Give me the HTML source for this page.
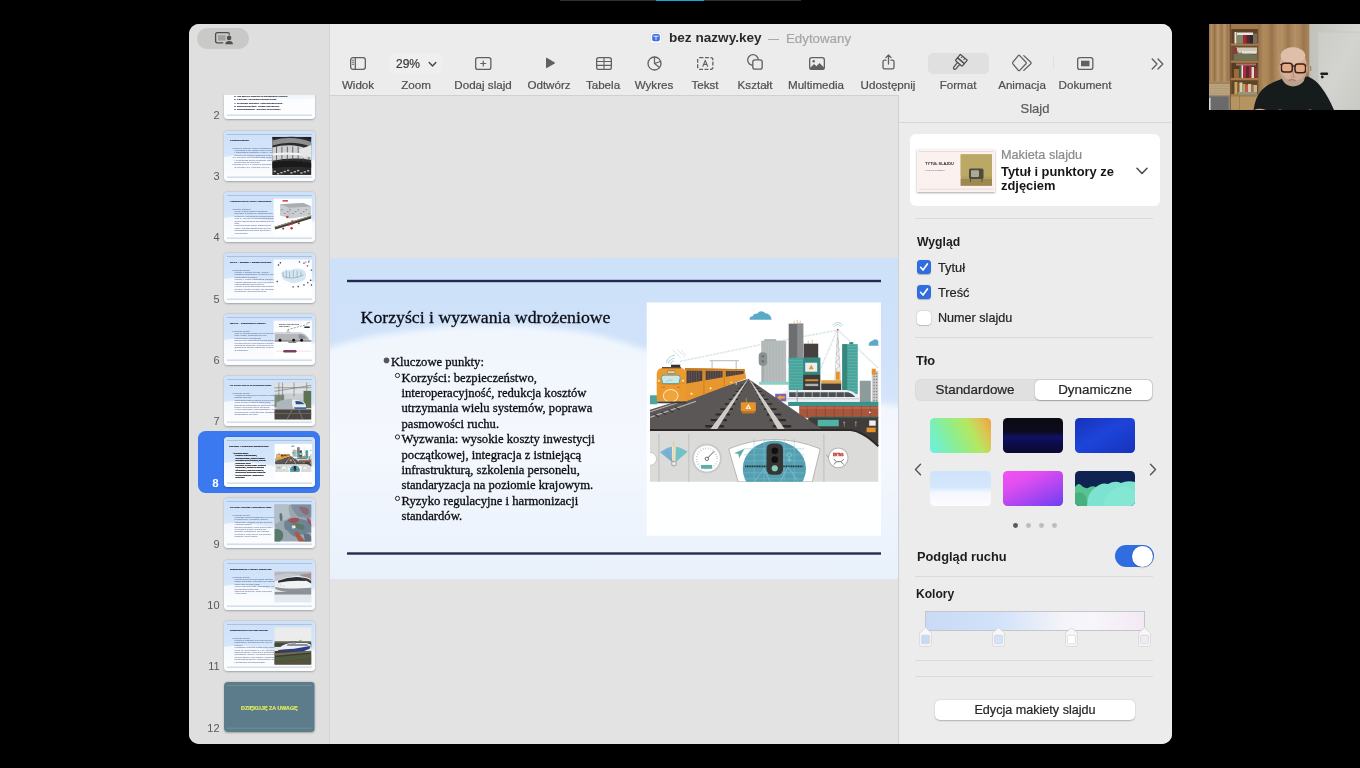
<!DOCTYPE html><html lang="pl"><head><meta charset="utf-8"><title>bez nazwy.key</title><style>
*{box-sizing:border-box;margin:0;padding:0}
html,body{width:1360px;height:768px;background:#000;overflow:hidden}
body{position:relative;font-family:"Liberation Sans",sans-serif;color:#222}
.abs{position:absolute}
#win{position:absolute;left:189px;top:24px;width:982.6px;height:720px;border-radius:10px;overflow:hidden;background:#ececec}
#side{position:absolute;left:0;top:0;width:140.5px;height:720px;background:#dfdfdf;border-right:1px solid #d4d4d4;z-index:2}
#tb{position:absolute;left:140px;top:0;width:842.6px;height:71.5px;background:#ececec;border-bottom:1px solid #d0d0d0}
#canvas{position:absolute;left:140px;top:71px;width:570px;height:649px;background:#e3e3e3}
#panel{position:absolute;left:709px;top:71px;width:273.6px;height:649px;background:#ececec;border-left:1px solid #d0d0d0}
.lbl{position:absolute;font-size:11.6px;color:#4a4a4a;white-space:nowrap;transform:translateX(-50%);line-height:14px;top:54px}
.t{position:absolute;white-space:nowrap;line-height:16px}
.t.r{-webkit-text-stroke:.22px currentColor}
svg{position:absolute;overflow:visible}
.t,.num,svg{will-change:transform}

#list{position:absolute;left:0;top:71px;width:140px;height:649px;overflow:hidden}
.th{position:absolute;left:34.9px;width:90.7px;height:50.2px;border-radius:4px;overflow:hidden;box-shadow:0 .5px 2px rgba(0,0,0,.28);background:#e9f1fc}
.th svg{left:0;top:0}
.num{position:absolute;width:30.6px;text-align:right;font-size:11px;color:#5a5a5a;line-height:14px;left:0}
#sel{position:absolute;left:9px;width:122px;height:61.3px;border-radius:7.5px;background:#3b79f0}

.sep{position:absolute;left:16.200px;width:238.200px;height:1px;background:#dadada}
.sw{position:absolute;width:60.300px;height:35px;border-radius:4.500px;overflow:hidden}
.cb{position:absolute;left:18.100px;width:14px;height:14px;border-radius:3.500px;background:#2f6de0;box-shadow:0 .5px 1px rgba(0,0,0,.25)}
</style></head><body>
<div class="abs" style="left:560px;top:0;width:241px;height:1px;background:#2e2e2e"></div>
<div class="abs" style="left:656px;top:0;width:48px;height:1px;background:#1aa3d4"></div>
<div id="win">
<div id="side"><div class="abs" style="left:8px;top:4px;width:52px;height:20.5px;border-radius:10.2px;background:#c9c9c8"></div><svg style="left:24px;top:6px" width="22" height="17" viewBox="0 0 22 17"><path d="M9.800 12.800H4.300Q2.600 12.800 2.600 11.100V4.400Q2.600 2.700 4.300 2.700H14.700Q16.300 2.700 16.400 4.200" fill="none" stroke="#4d4d4d" stroke-width="1.300" stroke-linecap="round"/><rect x="5" y="5.100" width="7.500" height="5.500" fill="#a2a2a2"/><circle cx="16.100" cy="7.900" r="2.300" fill="#4d4d4d"/><path d="M12.300 14.300Q12.600 11 16.100 11Q19.700 11 20 14.300z" fill="#4d4d4d"/></svg><div id="list"><div class="th" style="top:-25.80px"><svg width="90.7" height="50.2" viewBox="0 0 570 321" preserveAspectRatio="none"><rect width="570" height="321" fill="url(#sbg2)"/><g filter="url(#blur4)"><path d="M-12 170 C60 150 150 160 230 175 C320 190 420 200 585 185 V335 H-12z" fill="#fff" opacity=".7"/></g><rect y="150" width="570" height="171" fill="#fff" opacity=".6"/><rect x="18" y="293" width="534" height="3.500" fill="#8fa6c8"/><text x="64" y="180.6" font-size="15.500" font-weight="700" fill="#161c30" stroke="#161c30" stroke-width=".5" font-family="'Liberation Sans',sans-serif">5. Jak ERTMS wpływa na zarządzanie ruchem</text><text x="64" y="201.2" font-size="15.500" font-weight="700" fill="#161c30" stroke="#161c30" stroke-width=".5" font-family="'Liberation Sans',sans-serif">6. Korzyści i wyzwania wdrożeniowe</text><text x="64" y="221.8" font-size="15.500" font-weight="700" fill="#161c30" stroke="#161c30" stroke-width=".5" font-family="'Liberation Sans',sans-serif">7. Przykłady wdrożeń i interoperacyjność</text><text x="64" y="242.4" font-size="15.500" font-weight="700" fill="#161c30" stroke="#161c30" stroke-width=".5" font-family="'Liberation Sans',sans-serif">8. Bezpieczeństwo i rozwój operacyjny</text><text x="64" y="263.0" font-size="15.500" font-weight="700" fill="#161c30" stroke="#161c30" stroke-width=".5" font-family="'Liberation Sans',sans-serif">9. Podsumowanie i kierunki przyszłości</text></svg></div><div class="num" style="top:12.7px">2</div><div class="th" style="top:35.50px"><svg width="90.7" height="50.2" viewBox="0 0 570 321" preserveAspectRatio="none"><rect width="570" height="321" fill="url(#sbg2)"/><g filter="url(#blur4)"><path d="M-12 170 C60 150 150 160 230 175 C320 190 420 200 585 185 V335 H-12z" fill="#fff" opacity=".7"/></g><rect x="18" y="21" width="534" height="3.500" fill="#8fa6c8"/><rect x="18" y="293" width="534" height="3.500" fill="#8fa6c8"/><text x="36" y="65" font-size="16.500" font-weight="700" fill="#10162c" stroke="#10162c" stroke-width=".5" font-family="'Liberation Serif',serif">Kluczowe punkty</text><text x="54" y="112.0" font-size="13.2" font-weight="700" opacity=".74" fill="#44557c" font-family="'Liberation Sans',sans-serif">ERTMS to wspólny system zarządzania ruchem</text><text x="66" y="127.5" font-size="13.2" font-weight="700" opacity=".74" fill="#44557c" font-family="'Liberation Sans',sans-serif">kolejowym w UE, łączący ETCS (kontrola</text><text x="66" y="143.0" font-size="13.2" font-weight="700" opacity=".74" fill="#44557c" font-family="'Liberation Sans',sans-serif">i sygnalizacja kabinowa) z GSM-R. Obecnie trwa</text><text x="66" y="158.5" font-size="13.2" font-weight="700" opacity=".74" fill="#44557c" font-family="'Liberation Sans',sans-serif">przejście do FRMCS (następca GSM-R).</text><text x="54" y="174.0" font-size="13.2" font-weight="700" opacity=".74" fill="#44557c" font-family="'Liberation Sans',sans-serif">Cel: zapewnić interoperacyjność, bezpieczeństwo</text><text x="66" y="189.5" font-size="13.2" font-weight="700" opacity=".74" fill="#44557c" font-family="'Liberation Sans',sans-serif">i efektywność poprzez wymianę sygnalizacji</text><text x="66" y="205.0" font-size="13.2" font-weight="700" opacity=".74" fill="#44557c" font-family="'Liberation Sans',sans-serif">przytorowej na kabinową.</text><text x="54" y="220.5" font-size="13.2" font-weight="700" opacity=".74" fill="#44557c" font-family="'Liberation Sans',sans-serif">Poziomy ETCS 1-3: poziom 2 dominuje; rozwój</text><text x="66" y="236.0" font-size="13.2" font-weight="700" opacity=".74" fill="#44557c" font-family="'Liberation Sans',sans-serif">w kierunku ATO, satelitów i Level 3.</text><g><rect x="304" y="38" width="244" height="243" fill="#2b2b2c"/><path d="M304 60 Q430 25 548 70 V100 Q430 55 304 92z" fill="#8d8f90"/><path d="M304 38H548V52Q430 22 304 50z" fill="#1d1d1e"/><path d="M304 105 Q430 70 548 120 V185 Q430 165 304 190z" fill="#cfd1d2"/><g stroke="#4a4a4b" stroke-width="5"><path d="M330 100V190"/><path d="M364 100V190"/><path d="M398 100V190"/><path d="M432 100V190"/><path d="M466 100V190"/><path d="M500 100V190"/><path d="M534 100V190"/></g><path d="M304 150Q430 135 548 160" stroke="#f2f2f2" stroke-width="14" fill="none"/><path d="M304 200 Q430 180 548 205 V235 Q430 222 304 238z" fill="#1a1a1b"/><g fill="#b9babb"><rect x="312" y="254" width="14" height="9"/><rect x="333" y="269" width="14" height="9"/><rect x="354" y="262" width="14" height="9"/><rect x="375" y="255" width="14" height="9"/><rect x="396" y="248" width="14" height="9"/><rect x="417" y="263" width="14" height="9"/><rect x="438" y="256" width="14" height="9"/><rect x="459" y="249" width="14" height="9"/><rect x="480" y="264" width="14" height="9"/><rect x="501" y="257" width="14" height="9"/><rect x="522" y="250" width="14" height="9"/></g><path d="M470 120L548 90V150L500 175z" fill="#e6e6e6"/></g></svg></div><div class="num" style="top:74.0px">3</div><div class="th" style="top:96.80px"><svg width="90.7" height="50.2" viewBox="0 0 570 321" preserveAspectRatio="none"><rect width="570" height="321" fill="url(#sbg2)"/><g filter="url(#blur4)"><path d="M-12 170 C60 150 150 160 230 175 C320 190 420 200 585 185 V335 H-12z" fill="#fff" opacity=".7"/></g><rect x="18" y="21" width="534" height="3.500" fill="#8fa6c8"/><rect x="18" y="293" width="534" height="3.500" fill="#8fa6c8"/><text x="36" y="65" font-size="16.500" font-weight="700" fill="#10162c" stroke="#10162c" stroke-width=".5" textLength="262" lengthAdjust="spacingAndGlyphs" font-family="'Liberation Serif',serif">Architektura ERTMS: warstwy i funkcje poziom</text><text x="54" y="112.0" font-size="13.2" font-weight="700" opacity=".74" fill="#44557c" font-family="'Liberation Sans',sans-serif">Warstwy systemu:</text><text x="66" y="127.5" font-size="13.2" font-weight="700" opacity=".74" fill="#44557c" font-family="'Liberation Sans',sans-serif">ETCS: system kontroli pociągów,</text><text x="66" y="143.0" font-size="13.2" font-weight="700" opacity=".74" fill="#44557c" font-family="'Liberation Sans',sans-serif">informuje o prędkości, ograniczeniach</text><text x="66" y="158.5" font-size="13.2" font-weight="700" opacity=".74" fill="#44557c" font-family="'Liberation Sans',sans-serif">prędkości i sytuacjach niebezpiecznych.</text><text x="66" y="174.0" font-size="13.2" font-weight="700" opacity=".74" fill="#44557c" font-family="'Liberation Sans',sans-serif">GSM-R: cyfrowy system komunikacyjny</text><text x="66" y="189.5" font-size="13.2" font-weight="700" opacity=".74" fill="#44557c" font-family="'Liberation Sans',sans-serif">między maszynistą a dyspozytorem oraz</text><text x="66" y="205.0" font-size="13.2" font-weight="700" opacity=".74" fill="#44557c" font-family="'Liberation Sans',sans-serif">RBC.</text><text x="66" y="220.5" font-size="13.2" font-weight="700" opacity=".74" fill="#44557c" font-family="'Liberation Sans',sans-serif">ETML/European Traffic Management</text><text x="66" y="236.0" font-size="13.2" font-weight="700" opacity=".74" fill="#44557c" font-family="'Liberation Sans',sans-serif">Layer): warstwa zarządzania ruchem,</text><text x="66" y="251.5" font-size="13.2" font-weight="700" opacity=".74" fill="#44557c" font-family="'Liberation Sans',sans-serif">optymalizująca przepływ pociągów i</text><text x="66" y="267.0" font-size="13.2" font-weight="700" opacity=".74" fill="#44557c" font-family="'Liberation Sans',sans-serif">rozkład jazdy.</text><g><rect x="312" y="42" width="240" height="238" fill="#fff" opacity=".92"/><rect x="368" y="52" width="34" height="9" fill="#c8353a"/><path d="M352 78 L500 70 L548 92 V150 L420 170 L352 150z" fill="#c9ccd0"/><path d="M352 78 L500 70 L548 92 L410 100z" fill="#a9adb2"/><path d="M410 100V170" stroke="#9aa0a6" stroke-width="2"/><g fill="#8d9298"><rect x="360" y="110" width="10" height="7"/><rect x="377" y="134" width="10" height="7"/><rect x="394" y="122" width="10" height="7"/><rect x="411" y="110" width="10" height="7"/><rect x="428" y="134" width="10" height="7"/><rect x="445" y="122" width="10" height="7"/><rect x="462" y="110" width="10" height="7"/><rect x="479" y="134" width="10" height="7"/><rect x="496" y="122" width="10" height="7"/><rect x="513" y="110" width="10" height="7"/><rect x="530" y="134" width="10" height="7"/></g><path d="M318 222 L548 150 V170 L322 240z" fill="#3a3d40"/><path d="M318 222 L548 150 V156 L318 229z" fill="#9a9d70"/><g fill="#c8353a"><circle cx="398" cy="160" r="8"/><circle cx="430" cy="188" r="7"/><circle cx="470" cy="200" r="7"/><circle cx="425" cy="232" r="8"/><circle cx="372" cy="234" r="7"/><rect x="395" y="205" width="40" height="7" transform="rotate(-17 415 208)"/></g></g></svg></div><div class="num" style="top:135.3px">4</div><div class="th" style="top:158.10px"><svg width="90.7" height="50.2" viewBox="0 0 570 321" preserveAspectRatio="none"><rect width="570" height="321" fill="url(#sbg2)"/><g filter="url(#blur4)"><path d="M-12 170 C60 150 150 160 230 175 C320 190 420 200 585 185 V335 H-12z" fill="#fff" opacity=".7"/></g><rect x="18" y="21" width="534" height="3.500" fill="#8fa6c8"/><rect x="18" y="293" width="534" height="3.500" fill="#8fa6c8"/><text x="36" y="65" font-size="16.500" font-weight="700" fill="#10162c" stroke="#10162c" stroke-width=".5" textLength="262" lengthAdjust="spacingAndGlyphs" font-family="'Liberation Serif',serif">ETCS – poziomy i sposób działania</text><text x="54" y="112.0" font-size="13.2" font-weight="700" opacity=".74" fill="#44557c" font-family="'Liberation Sans',sans-serif">Kluczowe punkty:</text><text x="66" y="127.5" font-size="13.2" font-weight="700" opacity=".74" fill="#44557c" font-family="'Liberation Sans',sans-serif">Poziom 1: sygnały torowe, kabina i</text><text x="66" y="143.0" font-size="13.2" font-weight="700" opacity=".74" fill="#44557c" font-family="'Liberation Sans',sans-serif">urządzenia przytorowe (eurobalisy) ERTMS</text><text x="66" y="158.5" font-size="13.2" font-weight="700" opacity=".74" fill="#44557c" font-family="'Liberation Sans',sans-serif">dostarczają informacje.</text><text x="66" y="174.0" font-size="13.2" font-weight="700" opacity=".74" fill="#44557c" font-family="'Liberation Sans',sans-serif">Poziom 2: ciągła komunikacja radiowa GSM-R,</text><text x="66" y="189.5" font-size="13.2" font-weight="700" opacity=".74" fill="#44557c" font-family="'Liberation Sans',sans-serif">centrala radiowa RBC, brak konieczności</text><text x="66" y="205.0" font-size="13.2" font-weight="700" opacity=".74" fill="#44557c" font-family="'Liberation Sans',sans-serif">sygnalizatorów przytorowych.</text><text x="66" y="220.5" font-size="13.2" font-weight="700" opacity=".74" fill="#44557c" font-family="'Liberation Sans',sans-serif">Poziom 3: pełna autonomiczna kontrola ruchu,</text><text x="66" y="236.0" font-size="13.2" font-weight="700" opacity=".74" fill="#44557c" font-family="'Liberation Sans',sans-serif">ruchomy odstęp blokowy, bez sygnalizacji</text><text x="66" y="251.5" font-size="13.2" font-weight="700" opacity=".74" fill="#44557c" font-family="'Liberation Sans',sans-serif">przytorowej; wdrożenia testowe.</text><g><rect x="312" y="42" width="240" height="238" fill="#fff" opacity=".92"/><path d="M360 130 Q380 100 420 110 Q450 90 490 105 Q520 110 515 150 Q510 180 470 185 Q430 200 400 180 Q360 175 360 130z" fill="#d3e6f3"/><g stroke="#7d8b99" stroke-width="3" fill="none"><path d="M372 150V120M392 160V112M412 160V118M436 158V108M460 160V112M484 150V118M372 150Q430 175 500 140"/></g><g fill="#444b55"><rect x="350" y="58" width="9" height="9" rx="2"/><rect x="338" y="72" width="9" height="9" rx="2"/><rect x="470" y="52" width="9" height="9" rx="2"/><rect x="498" y="60" width="9" height="9" rx="2"/><rect x="528" y="52" width="9" height="9" rx="2"/><rect x="520" y="78" width="9" height="9" rx="2"/><rect x="545" y="105" width="9" height="9" rx="2"/><rect x="330" y="178" width="9" height="9" rx="2"/><rect x="540" y="170" width="9" height="9" rx="2"/><rect x="545" y="200" width="9" height="9" rx="2"/><rect x="498" y="200" width="9" height="9" rx="2"/><rect x="462" y="210" width="9" height="9" rx="2"/><rect x="430" y="212" width="9" height="9" rx="2"/><rect x="522" y="185" width="9" height="9" rx="2"/></g><g fill="#c8353a"><circle cx="514" cy="58" r="4"/><circle cx="535" cy="48" r="3"/></g></g></svg></div><div class="num" style="top:196.6px">5</div><div class="th" style="top:219.40px"><svg width="90.7" height="50.2" viewBox="0 0 570 321" preserveAspectRatio="none"><rect width="570" height="321" fill="url(#sbg2)"/><g filter="url(#blur4)"><path d="M-12 170 C60 150 150 160 230 175 C320 190 420 200 585 185 V335 H-12z" fill="#fff" opacity=".7"/></g><rect x="18" y="21" width="534" height="3.500" fill="#8fa6c8"/><rect x="18" y="293" width="534" height="3.500" fill="#8fa6c8"/><text x="36" y="65" font-size="16.500" font-weight="700" fill="#10162c" stroke="#10162c" stroke-width=".5" font-family="'Liberation Serif',serif">GSM-R – komunikacja radiowa</text><text x="54" y="112.0" font-size="13.2" font-weight="700" opacity=".74" fill="#44557c" font-family="'Liberation Sans',sans-serif">Kluczowe punkty:</text><text x="66" y="127.5" font-size="13.2" font-weight="700" opacity=".74" fill="#44557c" font-family="'Liberation Sans',sans-serif">GSM-R: specjalizowana sieć dla kolejnictwa</text><text x="66" y="143.0" font-size="13.2" font-weight="700" opacity=".74" fill="#44557c" font-family="'Liberation Sans',sans-serif">(głos i dane), niezależna od sieci</text><text x="66" y="158.5" font-size="13.2" font-weight="700" opacity=".74" fill="#44557c" font-family="'Liberation Sans',sans-serif">komercyjnych operatorów.</text><text x="66" y="174.0" font-size="13.2" font-weight="700" opacity=".74" fill="#44557c" font-family="'Liberation Sans',sans-serif">Bezpieczna komunikacja między maszynistą</text><text x="66" y="189.5" font-size="13.2" font-weight="700" opacity=".74" fill="#44557c" font-family="'Liberation Sans',sans-serif">a dyspozytorem, priorytetyzacja połączeń,</text><text x="66" y="205.0" font-size="13.2" font-weight="700" opacity=".74" fill="#44557c" font-family="'Liberation Sans',sans-serif">połączenia alarmowe, transmisja ETCS.</text><text x="66" y="220.5" font-size="13.2" font-weight="700" opacity=".74" fill="#44557c" font-family="'Liberation Sans',sans-serif">Migracja do nowego standardu FRMCS</text><text x="66" y="236.0" font-size="13.2" font-weight="700" opacity=".74" fill="#44557c" font-family="'Liberation Sans',sans-serif">w przyszłości.</text><g><rect x="312" y="42" width="240" height="238" fill="#fff" opacity=".92"/><text x="345" y="72" font-size="9" font-weight="700" fill="#222" font-family="'Liberation Sans',sans-serif">Euroradio / Train data request</text><text x="345" y="83" font-size="9" font-weight="700" fill="#222" font-family="'Liberation Sans',sans-serif">GSM-R network</text><path d="M400 100L520 68" stroke="#333" stroke-width="3" stroke-dasharray="12 8"/><rect x="505" y="80" width="34" height="9" fill="#222"/><path d="M520 60l20-8" stroke="#333" stroke-width="3"/><path d="M318 118 H480 Q510 122 535 160 V168 H318z" fill="#b5b7ba"/><path d="M318 118H480Q495 120 505 128H318z" fill="#d2d4d6"/><path d="M470 128 Q500 132 520 156 H470z" fill="#8e9195"/><path d="M395 118l8-14l8 14" stroke="#333" stroke-width="2.500" fill="none"/><rect x="318" y="170" width="232" height="5" fill="#222"/><circle cx="352" cy="168" r="9" fill="#111"/><circle cx="438" cy="168" r="9" fill="#111"/><circle cx="488" cy="168" r="9" fill="#111"/><rect x="405" y="178" width="50" height="5" fill="#444"/><path d="M325 238H548" stroke="#e3a9c0" stroke-width="2.500"/><rect x="372" y="230" width="84" height="17" rx="8.500" fill="#7b3b63"/></g></svg></div><div class="num" style="top:257.9px">6</div><div class="th" style="top:280.70px"><svg width="90.7" height="50.2" viewBox="0 0 570 321" preserveAspectRatio="none"><rect width="570" height="321" fill="url(#sbg2)"/><g filter="url(#blur4)"><path d="M-12 170 C60 150 150 160 230 175 C320 190 420 200 585 185 V335 H-12z" fill="#fff" opacity=".7"/></g><rect x="18" y="21" width="534" height="3.500" fill="#8fa6c8"/><rect x="18" y="293" width="534" height="3.500" fill="#8fa6c8"/><text x="36" y="65" font-size="16.500" font-weight="700" fill="#10162c" stroke="#10162c" stroke-width=".5" textLength="262" lengthAdjust="spacingAndGlyphs" font-family="'Liberation Serif',serif">Jak ERTMS wpływa na zarządzanie ruchem</text><text x="54" y="112.0" font-size="13.2" font-weight="700" opacity=".74" fill="#44557c" font-family="'Liberation Sans',sans-serif">Kluczowe punkty:</text><text x="66" y="127.5" font-size="13.2" font-weight="700" opacity=".74" fill="#44557c" font-family="'Liberation Sans',sans-serif">Precyzyjna lokalizacja pociągów, krótsze</text><text x="66" y="143.0" font-size="13.2" font-weight="700" opacity=".74" fill="#44557c" font-family="'Liberation Sans',sans-serif">odstępy blokowe.</text><text x="66" y="158.5" font-size="13.2" font-weight="700" opacity=".74" fill="#44557c" font-family="'Liberation Sans',sans-serif">Zautomatyzowana kontrola bezpieczeństwa,</text><text x="66" y="174.0" font-size="13.2" font-weight="700" opacity=".74" fill="#44557c" font-family="'Liberation Sans',sans-serif">ciągły nadzór prędkości maszynisty.</text><text x="66" y="189.5" font-size="13.2" font-weight="700" opacity=".74" fill="#44557c" font-family="'Liberation Sans',sans-serif">Możliwość dynamicznego dostosowywania</text><text x="66" y="205.0" font-size="13.2" font-weight="700" opacity=".74" fill="#44557c" font-family="'Liberation Sans',sans-serif">tempa i kolejności ruchu pociągów.</text><text x="66" y="220.5" font-size="13.2" font-weight="700" opacity=".74" fill="#44557c" font-family="'Liberation Sans',sans-serif">Lepsze planowanie przepustowości i reakcja</text><text x="66" y="236.0" font-size="13.2" font-weight="700" opacity=".74" fill="#44557c" font-family="'Liberation Sans',sans-serif">na zakłócenia; efektywniejsze zarządzanie</text><text x="66" y="251.5" font-size="13.2" font-weight="700" opacity=".74" fill="#44557c" font-family="'Liberation Sans',sans-serif">infrastrukturą kolejową.</text><g><rect x="318" y="42" width="230" height="236" fill="#c9cdd0"/><rect x="318" y="42" width="230" height="70" fill="#dfe2e4"/><rect x="500" y="95" width="48" height="110" fill="#5d7350"/><rect x="318" y="120" width="60" height="80" fill="#7d8a78"/><g stroke="#6f7478" stroke-width="4"><path d="M345 42V215M368 42V215M318 75H548M440 42V130M520 42V120M318 98L548 60"/></g><path d="M330 170 Q380 140 450 150 Q500 150 515 185 V215 H330z" fill="#aeb6bd"/><path d="M430 150 Q500 150 515 188 V214 H440 Q420 180 430 150z" fill="#e9edf0"/><path d="M448 160 Q490 158 505 180 H452z" fill="#2d4f86"/><path d="M440 200H516V212H444z" fill="#3e68a8"/><rect x="318" y="214" width="230" height="64" fill="#4a4540"/><path d="M430 214L395 278M470 214L495 278" stroke="#8b857c" stroke-width="5"/><path d="M318 240H548" stroke="#6b655d" stroke-width="6"/></g></svg></div><div class="num" style="top:319.2px">7</div><div id="sel" style="top:336.4px"></div><div class="th" style="top:342.00px"><svg width="90.7" height="50.2" viewBox="0 0 570 321" preserveAspectRatio="none"><rect width="570" height="321" fill="url(#sbg2)"/><g filter="url(#blur4)"><path d="M-12 170 C60 150 150 160 230 175 C320 190 420 200 585 185 V335 H-12z" fill="#fff" opacity=".7"/></g><rect x="18" y="21" width="534" height="3.500" fill="#8fa6c8"/><rect x="18" y="293" width="534" height="3.500" fill="#8fa6c8"/><use href="#s8" width="570" height="321" style="--sw:.9px"/></svg></div><div class="num" style="top:380.5px;color:#fff;font-weight:700;width:29.700px;font-size:11.500px">8</div><div class="th" style="top:403.30px"><svg width="90.7" height="50.2" viewBox="0 0 570 321" preserveAspectRatio="none"><rect width="570" height="321" fill="url(#sbg2)"/><g filter="url(#blur4)"><path d="M-12 170 C60 150 150 160 230 175 C320 190 420 200 585 185 V335 H-12z" fill="#fff" opacity=".7"/></g><rect x="18" y="21" width="534" height="3.500" fill="#8fa6c8"/><rect x="18" y="293" width="534" height="3.500" fill="#8fa6c8"/><text x="36" y="65" font-size="16.500" font-weight="700" fill="#10162c" stroke="#10162c" stroke-width=".5" textLength="262" lengthAdjust="spacingAndGlyphs" font-family="'Liberation Serif',serif">Przykłady wdrożeń i interoperacyjność</text><text x="54" y="112.0" font-size="13.2" font-weight="700" opacity=".74" fill="#44557c" font-family="'Liberation Sans',sans-serif">Kluczowe punkty:</text><text x="66" y="127.5" font-size="13.2" font-weight="700" opacity=".74" fill="#44557c" font-family="'Liberation Sans',sans-serif">Przykłady krajów wdrażających na szeroką skalę</text><text x="66" y="143.0" font-size="13.2" font-weight="700" opacity=".74" fill="#44557c" font-family="'Liberation Sans',sans-serif">ERTMS/ETCS: Hiszpania, Włochy,</text><text x="66" y="158.5" font-size="13.2" font-weight="700" opacity=".74" fill="#44557c" font-family="'Liberation Sans',sans-serif">Szwajcaria, Holandia, Belgia (poziomy</text><text x="66" y="174.0" font-size="13.2" font-weight="700" opacity=".74" fill="#44557c" font-family="'Liberation Sans',sans-serif">i harmonogramy).</text><text x="66" y="189.5" font-size="13.2" font-weight="700" opacity=".74" fill="#44557c" font-family="'Liberation Sans',sans-serif">Interoperacyjność: jeden pociąg może</text><text x="66" y="205.0" font-size="13.2" font-weight="700" opacity=".74" fill="#44557c" font-family="'Liberation Sans',sans-serif">przekraczać granice państw bez</text><text x="66" y="220.5" font-size="13.2" font-weight="700" opacity=".74" fill="#44557c" font-family="'Liberation Sans',sans-serif">wymiany lokomotywy czy systemu.</text><text x="66" y="236.0" font-size="13.2" font-weight="700" opacity=".74" fill="#44557c" font-family="'Liberation Sans',sans-serif">Wyzwania: różne wersje specyfikacji,</text><text x="66" y="251.5" font-size="13.2" font-weight="700" opacity=".74" fill="#44557c" font-family="'Liberation Sans',sans-serif">migracja i koszt taboru.</text><g><rect x="318" y="42" width="230" height="236" fill="#9aa7b1"/><path d="M318 42H410Q400 90 420 120Q380 150 360 140Q330 170 318 160z" fill="#b4bec6"/><path d="M420 42H548V120Q520 140 500 120Q470 130 450 100Q430 80 420 42z" fill="#7f8f9c"/><path d="M350 100Q362 90 366 110Q372 140 360 150Q346 140 350 100z" fill="#5f7383"/><path d="M380 150Q430 120 480 135Q530 140 548 170V220Q520 215 500 235Q470 225 450 250Q420 240 400 210Q370 200 380 150z" fill="#6f8493"/><path d="M400 140Q430 120 470 130Q480 150 450 160Q420 165 400 140z" fill="#a0525a"/><path d="M470 60Q500 50 530 70Q540 100 520 110Q490 100 470 60z" fill="#8d6a78"/><path d="M430 165Q470 160 500 175Q520 200 490 205Q450 200 430 165z" fill="#587a6a"/><path d="M520 130Q548 125 548 180Q530 170 520 130z" fill="#a0525a"/><path d="M318 200Q350 190 370 220Q380 260 350 278H318z" fill="#587a6a"/><path d="M440 215Q470 210 480 240Q500 270 520 278H470Q450 250 440 215z" fill="#a85a4a"/><path d="M425 178l22-4l4 16l-20 6z" fill="#f3ead2"/><path d="M500 230Q540 220 548 250V278H510z" fill="#5f7383"/></g></svg></div><div class="num" style="top:441.8px">9</div><div class="th" style="top:464.60px"><svg width="90.7" height="50.2" viewBox="0 0 570 321" preserveAspectRatio="none"><rect width="570" height="321" fill="url(#sbg2)"/><g filter="url(#blur4)"><path d="M-12 170 C60 150 150 160 230 175 C320 190 420 200 585 185 V335 H-12z" fill="#fff" opacity=".7"/></g><rect x="18" y="21" width="534" height="3.500" fill="#8fa6c8"/><rect x="18" y="293" width="534" height="3.500" fill="#8fa6c8"/><text x="36" y="65" font-size="16.500" font-weight="700" fill="#10162c" stroke="#10162c" stroke-width=".5" textLength="262" lengthAdjust="spacingAndGlyphs" font-family="'Liberation Serif',serif">Bezpieczeństwo i rozwój: operacyjne</text><text x="54" y="112.0" font-size="13.2" font-weight="700" opacity=".74" fill="#44557c" font-family="'Liberation Sans',sans-serif">Kluczowe punkty:</text><text x="66" y="127.5" font-size="13.2" font-weight="700" opacity=".74" fill="#44557c" font-family="'Liberation Sans',sans-serif">Redukcja ryzyka przejechania sygnału,</text><text x="66" y="143.0" font-size="13.2" font-weight="700" opacity=".74" fill="#44557c" font-family="'Liberation Sans',sans-serif">nadzór prędkości, automatyczne hamowanie,</text><text x="66" y="158.5" font-size="13.2" font-weight="700" opacity=".74" fill="#44557c" font-family="'Liberation Sans',sans-serif">odporność na błąd ludzki.</text><text x="66" y="174.0" font-size="13.2" font-weight="700" opacity=".74" fill="#44557c" font-family="'Liberation Sans',sans-serif">Cyberbezpieczeństwo i szyfrowanie (OTA, KMS),</text><text x="66" y="189.5" font-size="13.2" font-weight="700" opacity=".74" fill="#44557c" font-family="'Liberation Sans',sans-serif">niezawodność łączności.</text><text x="66" y="205.0" font-size="13.2" font-weight="700" opacity=".74" fill="#44557c" font-family="'Liberation Sans',sans-serif">Szkolenia personelu, nowe procedury</text><text x="66" y="220.5" font-size="13.2" font-weight="700" opacity=".74" fill="#44557c" font-family="'Liberation Sans',sans-serif">i utrzymanie.</text><g><rect x="318" y="75" width="230" height="195" fill="#dde2e8"/><rect x="318" y="75" width="230" height="60" fill="#c5c9cf"/><path d="M470 80H548V130H500z" fill="#a9908f"/><path d="M318 100L400 85L470 95L548 85V75H318z" fill="#b4b9c0"/><path d="M322 138 Q400 100 480 104 Q530 108 548 128 V200 H430 Q360 196 322 176z" fill="#f1f3f4"/><path d="M340 132 Q410 104 478 110 L520 135 Q420 128 340 146z" fill="#2b2f35"/><path d="M470 112L520 135L548 150V132Q520 108 470 112z" fill="#3a3f46"/><path d="M322 172Q400 190 548 178V205H400Q350 200 322 182z" fill="#8d9299"/><path d="M318 205H548V222H318z" fill="#4a4e54" opacity=".55"/><rect x="318" y="222" width="230" height="48" fill="#e4e9ef"/><path d="M330 150l14 20M350 150l12 22M372 160l8 14" stroke="#9ca3ab" stroke-width="2"/></g></svg></div><div class="num" style="top:503.1px">10</div><div class="th" style="top:525.90px"><svg width="90.7" height="50.2" viewBox="0 0 570 321" preserveAspectRatio="none"><rect width="570" height="321" fill="url(#sbg2)"/><g filter="url(#blur4)"><path d="M-12 170 C60 150 150 160 230 175 C320 190 420 200 585 185 V335 H-12z" fill="#fff" opacity=".7"/></g><rect x="18" y="21" width="534" height="3.500" fill="#8fa6c8"/><rect x="18" y="293" width="534" height="3.500" fill="#8fa6c8"/><text x="36" y="65" font-size="16.500" font-weight="700" fill="#10162c" stroke="#10162c" stroke-width=".5" font-family="'Liberation Serif',serif">Podsumowanie i przyszłe kierunki</text><text x="54" y="112.0" font-size="13.2" font-weight="700" opacity=".74" fill="#44557c" font-family="'Liberation Sans',sans-serif">Kluczowe punkty:</text><text x="66" y="127.5" font-size="13.2" font-weight="700" opacity=".74" fill="#44557c" font-family="'Liberation Sans',sans-serif">ERTMS to kluczowy filar nowoczesnej,</text><text x="66" y="143.0" font-size="13.2" font-weight="700" opacity=".74" fill="#44557c" font-family="'Liberation Sans',sans-serif">bezpiecznej i interoperacyjnej kolei w</text><text x="66" y="158.5" font-size="13.2" font-weight="700" opacity=".74" fill="#44557c" font-family="'Liberation Sans',sans-serif">Europie.</text><text x="66" y="174.0" font-size="13.2" font-weight="700" opacity=".74" fill="#44557c" font-family="'Liberation Sans',sans-serif">Przyszłość: migracja z GSM-R do FRMCS,</text><text x="66" y="189.5" font-size="13.2" font-weight="700" opacity=".74" fill="#44557c" font-family="'Liberation Sans',sans-serif">ETCS L3 / hybrydowy L3, ATO, satelitarne</text><text x="66" y="205.0" font-size="13.2" font-weight="700" opacity=".74" fill="#44557c" font-family="'Liberation Sans',sans-serif">pozycjonowanie, integracja z systemami</text><text x="66" y="220.5" font-size="13.2" font-weight="700" opacity=".74" fill="#44557c" font-family="'Liberation Sans',sans-serif">zarządzania ruchem i cyfrowymi bliźniakami.</text><text x="66" y="236.0" font-size="13.2" font-weight="700" opacity=".74" fill="#44557c" font-family="'Liberation Sans',sans-serif">Rekomendacja: plan migracji i finansowania,</text><text x="66" y="251.5" font-size="13.2" font-weight="700" opacity=".74" fill="#44557c" font-family="'Liberation Sans',sans-serif">modernizacja taboru i infrastruktury, szkolenia</text><text x="66" y="267.0" font-size="13.2" font-weight="700" opacity=".74" fill="#44557c" font-family="'Liberation Sans',sans-serif">i współpraca międzynarodowa.</text><g><rect x="318" y="42" width="230" height="236" fill="#e6e7e8"/><rect x="318" y="42" width="230" height="95" fill="#ececec"/><path d="M318 130H548V165H318z" fill="#5d6552"/><path d="M318 142H400V165H318zM500 140H548V170H500z" fill="#3f463a"/><path d="M338 190 Q350 150 420 140 H520 L545 150 V176 L500 192 H338z" fill="#eef0f3"/><path d="M340 186Q380 180 440 178L540 160V176L500 193H340z" fill="#27408b"/><path d="M400 150H520L535 156H395z" fill="#2d3340"/><path d="M420 132h30v10h-30zM470 128l20-6" stroke="#555" stroke-width="3" fill="#888"/><rect x="318" y="192" width="230" height="86" fill="#3d3a30"/><path d="M318 206L548 190V202L318 222z" fill="#6d6a55"/><path d="M318 232L548 210V240L318 262z" fill="#4f5a3c"/><path d="M318 262L548 240V278H318z" fill="#57503f"/></g></svg></div><div class="num" style="top:564.4px">11</div><div class="th" style="top:587.20px"><svg width="90.7" height="50.2" viewBox="0 0 570 321" preserveAspectRatio="none"><rect width="570" height="321" fill="#5c7c8b"/><rect x="18" y="21" width="534" height="3.500" fill="#7aa39b"/><rect x="18" y="293" width="534" height="3.500" fill="#7aa39b"/><text x="285" y="181" font-size="37" stroke="#dbe95c" stroke-width="1.500" font-weight="700" fill="#dbe95c" text-anchor="middle" textLength="356" lengthAdjust="spacingAndGlyphs" font-family="'Liberation Sans',sans-serif">DZIĘKUJĘ ZA UWAGĘ</text></svg></div><div class="num" style="top:625.7px">12</div></div></div>
<div id="canvas"><svg width="0" height="0" style="position:absolute"><defs><linearGradient id="sbg" x1="0" y1="0" x2="0" y2="1"><stop offset="0" stop-color="#cde1f9"/><stop offset=".3" stop-color="#cfe2f9"/><stop offset=".6" stop-color="#dbe8fb"/><stop offset="1" stop-color="#e6effb"/></linearGradient><linearGradient id="sbg2" x1="0" y1="0" x2="0" y2="1"><stop offset="0" stop-color="#cde1f9"/><stop offset=".45" stop-color="#d3e5fa"/><stop offset=".7" stop-color="#e9f1fc"/><stop offset="1" stop-color="#f3f7fd"/></linearGradient><linearGradient id="cl1" gradientUnits="userSpaceOnUse" x1="0" y1="60" x2="0" y2="321"><stop offset="0" stop-color="#fff" stop-opacity=".7"/><stop offset=".5" stop-color="#fff" stop-opacity=".7"/><stop offset=".8" stop-color="#fff" stop-opacity=".42"/><stop offset="1" stop-color="#fff" stop-opacity=".12"/></linearGradient><filter id="blur4" x="-10%" y="-10%" width="120%" height="120%"><feGaussianBlur stdDeviation="3"/></filter><filter id="blur1"><feGaussianBlur stdDeviation="1.2"/></filter><symbol id="s8" viewBox="0 0 570 321" overflow="hidden"><text x="31.600" y="65.200" font-size="17.760" fill="#0c0c14" stroke="#0c0c14" style="stroke-width:var(--sw,.3px)" font-family="'Liberation Serif',serif">Korzyści i wyzwania wdrożeniowe</text><circle cx="57.500" cy="102.400" r="2.800" fill="#56565a"/><text x="61.9" y="108.30" font-size="12.650" fill="#0c0c10" stroke="#0c0c10" style="stroke-width:var(--sw,.3px)" font-family="'Liberation Serif',serif">Kluczowe punkty:</text><circle cx="68.500" cy="117.47" r="2.100" fill="none" stroke="#2a2a2e" stroke-width="1"/><text x="72.5" y="123.67" font-size="12.650" fill="#0c0c10" stroke="#0c0c10" style="stroke-width:var(--sw,.3px)" font-family="'Liberation Serif',serif">Korzyści: bezpieczeństwo,</text><text x="72.5" y="139.04" font-size="12.650" fill="#0c0c10" stroke="#0c0c10" style="stroke-width:var(--sw,.3px)" font-family="'Liberation Serif',serif">interoperacyjność, redukcja kosztów</text><text x="72.5" y="154.41" font-size="12.650" fill="#0c0c10" stroke="#0c0c10" style="stroke-width:var(--sw,.3px)" font-family="'Liberation Serif',serif">utrzymania wielu systemów, poprawa</text><text x="72.5" y="169.78" font-size="12.650" fill="#0c0c10" stroke="#0c0c10" style="stroke-width:var(--sw,.3px)" font-family="'Liberation Serif',serif">pasmowości ruchu.</text><circle cx="68.500" cy="178.95" r="2.100" fill="none" stroke="#2a2a2e" stroke-width="1"/><text x="72.5" y="185.15" font-size="12.650" fill="#0c0c10" stroke="#0c0c10" style="stroke-width:var(--sw,.3px)" font-family="'Liberation Serif',serif">Wyzwania: wysokie koszty inwestycji</text><text x="72.5" y="200.52" font-size="12.650" fill="#0c0c10" stroke="#0c0c10" style="stroke-width:var(--sw,.3px)" font-family="'Liberation Serif',serif">początkowej, integracja z istniejącą</text><text x="72.5" y="215.89" font-size="12.650" fill="#0c0c10" stroke="#0c0c10" style="stroke-width:var(--sw,.3px)" font-family="'Liberation Serif',serif">infrastrukturą, szkolenia personelu,</text><text x="72.5" y="231.26" font-size="12.650" fill="#0c0c10" stroke="#0c0c10" style="stroke-width:var(--sw,.3px)" font-family="'Liberation Serif',serif">standaryzacja na poziomie krajowym.</text><circle cx="68.500" cy="240.43" r="2.100" fill="none" stroke="#2a2a2e" stroke-width="1"/><text x="72.5" y="246.63" font-size="12.650" fill="#0c0c10" stroke="#0c0c10" style="stroke-width:var(--sw,.3px)" font-family="'Liberation Serif',serif">Ryzyko regulacyjne i harmonizacji</text><text x="72.5" y="262.00" font-size="12.650" fill="#0c0c10" stroke="#0c0c10" style="stroke-width:var(--sw,.3px)" font-family="'Liberation Serif',serif">standardów.</text><rect x="317.700" y="44.500" width="234.300" height="233.300" fill="#fff" opacity=".93"/><svg x="321" y="44.500" width="228.300" height="179.500" viewBox="0 0 228 179" style="position:static;overflow:hidden"><rect x="0" y="0" width="228" height="179" fill="#fff"/><path d="M99.5 17 q-.5-3.5 3-3.5 q1-3 4.5-2.5 q3.5-4.5 8.5-.5 q5 .5 6 6.5z" fill="#5aa9c9"/><path d="M218.5 43 q-.5-4 3.5-5 q3-3 6 0 v5z" fill="#5aa9c9"/><g stroke="#a9c6ce" stroke-width="1.500" stroke-dasharray="0.550 0.850" fill="none" opacity=".85"><path d="M30 58.700 L111 41.800 L187.500 27.400"/><path d="M188.500 28 L227.500 65"/><path d="M186.500 28.500 L170 66.500"/></g><g stroke="#8fc5cf" stroke-width=".7" fill="none"><path d="M184 24 q3.5-4 7 0"/><path d="M182.5 22.5 q5-5.5 10 0"/><path d="M18.500 61q.5-5 6-5.500"/><path d="M16.500 60.500q.5-7 8.500-8"/><path d="M20.500 61.500q.5-3 3.500-3.500"/><path d="M22.500 47l8 8M27 46.500l8 8M31 47.500l5 5" stroke="#cfd9dc"/></g><rect x="111" y="38" width="25" height="42" fill="#b7bdbd"/><g stroke="#a5acac" stroke-width=".5"><path d="M114 39V80"/><path d="M117 39V80"/><path d="M120 39V80"/><path d="M123 39V80"/><path d="M126 39V80"/><path d="M129 39V80"/><path d="M132 39V80"/></g><rect x="114" y="36.5" width="12" height="2" fill="#a9b0b0"/><rect x="138.5" y="21" width="14.5" height="40" fill="#6d6e70"/><rect x="147" y="21" width="6" height="40" fill="#8b8d8f"/><path d="M144 21v-3M147 21v-4M150 21v-3" stroke="#c9803a" stroke-width=".5"/><rect x="153.5" y="41" width="14.5" height="16" fill="#463f3f"/><path d="M158 41v-3M162 41v-4" stroke="#c9803a" stroke-width=".5"/><rect x="138.5" y="55" width="31.5" height="33" fill="#48a39c"/><g stroke="#6fc2bb" stroke-width=".5"><path d="M138.5 58H153"/><path d="M138.5 61H153"/><path d="M138.5 64H153"/><path d="M138.5 67H153"/><path d="M138.5 70H153"/><path d="M138.5 73H153"/><path d="M138.5 76H153"/><path d="M138.5 79H153"/><path d="M138.5 82H153"/><path d="M138.5 85H153"/></g><rect x="153" y="55" width="17" height="17" fill="#37877f"/><rect x="155" y="60" width="12" height="9" fill="#e9eeee"/><path d="M161 62l2.5 4.5h-5z" fill="#e8932a"/><rect x="153" y="72" width="17" height="16" fill="#3b3b3b"/><rect x="155" y="76.5" width="13" height="2" fill="#d98b2b"/><rect x="155" y="81" width="13" height="2.4" fill="#b0b0b0"/><rect x="192" y="41.5" width="15.5" height="50" fill="#48a39c"/><rect x="192" y="41.5" width="5" height="50" fill="#37877f"/><path d="M199 41.5v-2h4v2" fill="#37877f"/><g stroke="#7ccbc3" stroke-width=".45"><path d="M197 44H207.5"/><path d="M197 47H207.5"/><path d="M197 50H207.5"/><path d="M197 53H207.5"/><path d="M197 56H207.5"/><path d="M197 59H207.5"/><path d="M197 62H207.5"/><path d="M197 65H207.5"/><path d="M197 68H207.5"/><path d="M197 71H207.5"/><path d="M197 74H207.5"/><path d="M197 77H207.5"/><path d="M197 80H207.5"/><path d="M197 83H207.5"/><path d="M197 86H207.5"/><path d="M197 89H207.5"/></g><rect x="209.5" y="78" width="11" height="24" fill="#8e9b9b"/><rect x="221.5" y="68" width="6.5" height="35" fill="#d0d0ce"/><g fill="#8a8a8a"><rect x="223" y="70" width="1.5" height="1.5"/><rect x="225.5" y="70" width="1.5" height="1.5"/><rect x="223" y="73" width="1.5" height="1.5"/><rect x="225.5" y="73" width="1.5" height="1.5"/><rect x="223" y="76" width="1.5" height="1.5"/><rect x="225.5" y="76" width="1.5" height="1.5"/><rect x="223" y="79" width="1.5" height="1.5"/><rect x="225.5" y="79" width="1.5" height="1.5"/><rect x="223" y="82" width="1.5" height="1.5"/><rect x="225.5" y="82" width="1.5" height="1.5"/><rect x="223" y="85" width="1.5" height="1.5"/><rect x="225.5" y="85" width="1.5" height="1.5"/><rect x="223" y="88" width="1.5" height="1.5"/><rect x="225.5" y="88" width="1.5" height="1.5"/><rect x="223" y="91" width="1.5" height="1.5"/><rect x="225.5" y="91" width="1.5" height="1.5"/><rect x="223" y="94" width="1.5" height="1.5"/><rect x="225.5" y="94" width="1.5" height="1.5"/><rect x="223" y="97" width="1.5" height="1.5"/><rect x="225.5" y="97" width="1.5" height="1.5"/></g><rect x="221.5" y="66" width="4" height="6" fill="#e8932a"/><rect x="171" y="77.5" width="20" height="3.2" fill="#e8a13a"/><rect x="171" y="80.7" width="20" height="7" fill="#3d3d3d"/><path d="M187.5 27 L184.6 77 H190.4Z" fill="#f4f4f4" stroke="#b7b7b7" stroke-width=".5"/><path d="M186.8 35l1.6 4l-2 4l2.6 4l-3 4l3.4 4l-3.6 4l4 4l-4.4 4l4.8 4" stroke="#9c9c9c" stroke-width=".55" fill="none"/><rect x="185.5" y="69" width="4" height="8" fill="#e8932a"/><circle cx="187.5" cy="27" r=".9" fill="#d9534f"/><path d="M112.8 58V80" stroke="#9aa0a0" stroke-width="1"/><rect x="108.6" y="49.5" width="8.3" height="13.5" rx="3.5" fill="#8b9191"/><circle cx="112.7" cy="53.5" r="1.3" fill="#6b7070"/><circle cx="112.7" cy="58.5" r="1.3" fill="#6b7070"/><rect x="109" y="79" width="30" height="3" fill="#8ad0c8"/><rect x="138" y="99" width="90" height="4.2" fill="#36938d"/><path d="M132 92 q1-4.5 8-4.8 H196 q8 .8 13 7.3 v4.5H132z" fill="#eceff0"/><path d="M139 89.400H198q4 1.200 7 4.800H139z" fill="#4a4f55"/><g stroke="#dfe3e5" stroke-width=".6"><path d="M146 89.400v4.800"/><path d="M154 89.400v4.800"/><path d="M162 89.400v4.800"/><path d="M170 89.400v4.800"/><path d="M178 89.400v4.800"/><path d="M186 89.400v4.800"/><path d="M194 89.400v4.800"/></g><path d="M132 96H209" stroke="#b9bfc3" stroke-width=".7"/><path d="M147 87.3V99" stroke="#8f979c" stroke-width=".9"/><rect x="125" y="91" width="11" height="7.5" fill="#7a63b5"/><path d="M127 94.7l3.5-2.7v1.6h4.3v2.2h-4.3v1.6z" fill="#f2a13a"/><path d="M131 98.5v4" stroke="#8c8c8c" stroke-width=".7"/><rect x="149" y="103.2" width="79" height="11.8" fill="#a8573d"/><g stroke="#7f3d28" stroke-width=".6"><path d="M157 103.2v11.8"/><path d="M166 103.2v11.8"/><path d="M175 103.2v11.8"/><path d="M184 103.2v11.8"/><path d="M193 103.2v11.8"/><path d="M202 103.2v11.8"/><path d="M211 103.2v11.8"/><path d="M220 103.2v11.8"/></g><path d="M149 105.2H228" stroke="#c77b5f" stroke-width=".8"/><circle cx="219.5" cy="109.5" r=".9" fill="#fff"/><rect x="158" y="114.600" width="70" height="28" fill="#403d3b"/><rect x="167.500" y="117" width="21" height="6.500" fill="#4fb3a8"/><path d="M160 114.600H228" stroke="#2f5f5a" stroke-width="1.200"/><rect x="218.900" y="117.700" width="6.500" height="5.200" fill="#f1f1f1"/><rect x="216.300" y="124.800" width="9.100" height="4.600" fill="#e8932a"/><circle cx="194" cy="119.800" r="1" fill="#9a9a9a"/><circle cx="205.500" cy="119.800" r="1" fill="#9a9a9a"/><path d="M194 120.800v3M205.500 120.800v3" stroke="#9a9a9a" stroke-width=".7"/><path d="M98.2 76 L0 107 V128.3 H174 Z" fill="#5b5756"/><rect x="0" y="92.5" width="7.4" height="9" fill="#4fa39d"/><g stroke="#b9b6b2" stroke-width="1.1"><path d="M0 109 L40 96"/><path d="M0 114.6 L46 98.5"/></g><g stroke="#3a3736" stroke-width="1.2"><path d="M4 111.5l5 2.6M11 109.2l5 2.6M18 106.800l5 2.600M25 104.500l5 2.600"/></g><path d="M91.4 82.0H95.6M101.5 82.0H105.7" stroke="#2d2a2a" stroke-width="0.7"/><path d="M90.2 83.3H94.9M102.2 83.3H106.8" stroke="#2d2a2a" stroke-width="0.8"/><path d="M88.2 85.7H93.6M103.4 85.7H108.9" stroke="#2d2a2a" stroke-width="0.9"/><path d="M85.4 88.8H92.0M105.0 88.8H111.5" stroke="#2d2a2a" stroke-width="1.0"/><path d="M82.2 92.5H90.0M106.8 92.5H114.6" stroke="#2d2a2a" stroke-width="1.1"/><path d="M78.6 96.7H87.8M108.9 96.7H118.2" stroke="#2d2a2a" stroke-width="1.3"/><path d="M74.6 101.3H85.4M111.3 101.3H122.1" stroke="#2d2a2a" stroke-width="1.5"/><path d="M70.2 106.3H82.8M113.8 106.3H126.4" stroke="#2d2a2a" stroke-width="1.7"/><path d="M65.5 111.7H79.9M116.6 111.7H130.9" stroke="#2d2a2a" stroke-width="1.9"/><path d="M60.6 117.4H76.9M119.5 117.4H135.8" stroke="#2d2a2a" stroke-width="2.2"/><path d="M55.3 123.5H73.7M122.6 123.5H141.0" stroke="#2d2a2a" stroke-width="2.4"/><path d="M97.4 76.5 L60.4 126.3 H67.2 L98.1 76.500Z" fill="#cfccc8"/><path d="M98.900 76.500 L127.500 126.300 H134.500 L99.600 76.500Z" fill="#cfccc8"/><path d="M96.2 95v4.500" stroke="#d98b2b" stroke-width=".8"/><rect x="90.700" y="99.600" width="15" height="9" rx=".8" fill="#e8932a"/><rect x="92" y="108.600" width="12.500" height="2" fill="#c27a22"/><path d="M98.200 101.300l3 5h-6z" fill="#fbf0d8"/><circle cx="98.200" cy="105" r=".7" fill="#e8932a"/><path d="M62 57.700V66M86.100 57.700V82M59.500 57.900H88.700" stroke="#c3c7c7" stroke-width="1.200" fill="none"/><path d="M35 65.300 L94.600 66.500 L96 75.800 L35 99z" fill="#e8962e"/><path d="M35 65.300L94.600 66.500L94.700 67.700L35 67.300z" fill="#c97a1f"/><path d="M36.5 67.90L52.3 68.01L52.3 78.05L36.5 80.72z M55.5 68.04L72.5 68.16L72.5 74.63L55.5 77.50z M75.7 68.18L93.5 68.30L93.5 71.08L75.7 74.09z" fill="#4b4040"/><g stroke="#7d706b" stroke-width=".45"><path d="M39.0 68.200V80.1"/><path d="M41.5 68.200V79.7"/><path d="M44.0 68.200V79.2"/><path d="M46.5 68.200V78.8"/><path d="M49.0 68.200V78.4"/><path d="M58.0 68.200V76.9"/><path d="M60.5 68.200V76.5"/><path d="M63.0 68.200V76.0"/><path d="M65.5 68.200V75.6"/><path d="M68.0 68.200V75.2"/><path d="M70.5 68.200V74.8"/><path d="M78.0 68.200V73.5"/><path d="M80.5 68.200V73.1"/><path d="M83.0 68.200V72.7"/><path d="M85.5 68.200V72.2"/><path d="M88.0 68.200V71.8"/><path d="M90.5 68.200V71.4"/></g><path d="M53.900 67.500V92M74.100 67.500V84.500" stroke="#d07f22" stroke-width="1"/><circle cx="41.500" cy="91" r="1.100" fill="#fff6e0"/><circle cx="60.500" cy="85.600" r="1" fill="#fff6e0"/><circle cx="81" cy="79.500" r=".8" fill="#fff6e0"/><path d="M6.700 72 Q6.700 65.200 12.500 65.200 H30 Q35.400 65.200 35.400 70 V96 Q35.400 98.800 32 98.800 H9.500 Q6.700 98.800 6.700 95.500z" fill="#eb9a30"/><path d="M6.700 80Q21 84 35.400 80" stroke="#d98422" stroke-width=".7" fill="none"/><rect x="21" y="62" width="9.200" height="2.600" fill="#333"/><rect x="12" y="64.300" width="19" height="1.300" fill="#5a4a3a"/><path d="M11.300 75 Q11.300 72.400 14 72.400 H27.500 Q30.200 72.400 30.200 75 L28.800 80.800 H12.800z" fill="#cfe6e6" stroke="#3f9e98" stroke-width=".8"/><path d="M16 79q3-2.500 6.500-1.500" stroke="#7fbcc4" stroke-width=".6" fill="none"/><rect x="17.500" y="68.300" width="7.500" height="2.200" rx=".6" fill="#f7ead2" stroke="#5a4a3a" stroke-width=".5"/><ellipse cx="20.700" cy="93" rx="7.400" ry="6.300" fill="#f0a43a" stroke="#fbe3b8" stroke-width="1"/><circle cx="8.800" cy="78" r=".9" fill="#fff3d6"/><circle cx="33" cy="78" r=".9" fill="#fff3d6"/><path d="M11.500 84.500h3.500M27 84.500h3.500" stroke="#d9702a" stroke-width="1"/><path d="M6.700 98.800H35.400L37 100.500H8z" fill="#3e3a38"/><path d="M0 127.600 H200 Q212 128.500 228 144 V179 H0z" fill="#dbdbd9"/><path d="M0 127.300 H200 Q212 128.200 228 143.500" stroke="#2c2928" stroke-width="2" fill="none"/><path d="M8.900 131V179M38.800 131V179M173.700 131V179" stroke="#b8b8b6" stroke-width=".8"/><circle cx="0" cy="156" r="6.500" fill="#fff" stroke="#bdbdbd" stroke-width=".8"/><path d="M23.900 160.800 L10 149.500 Q16.500 144.500 22 143.900 V160z" fill="#79b4d6"/><path d="M23.900 160.800 L37.500 148.800 Q31 144.300 25.500 143.900 V160z" fill="#74c2c4"/><path d="M22 143.600h3.500l-.6 15h-2.300z" fill="#f3e9cc"/><path d="M23.800 139.500v19" stroke="#e0a850" stroke-width=".9" stroke-dasharray="1 1"/><path d="M23.900 160.800 L15.800 148.500" stroke="#8f9aa0" stroke-width=".9"/><circle cx="23.900" cy="160.800" r="2.400" fill="#e9e9e9" stroke="#9a9a9a" stroke-width=".9"/><circle cx="56.800" cy="155.700" r="15" fill="#c9cbcb"/><circle cx="56.800" cy="155.700" r="13" fill="#fff"/><circle cx="56.800" cy="155.700" r="10.300" fill="none" stroke="#9a9a9a" stroke-width="1.600" stroke-dasharray=".5 2.100"/><path d="M56.800 156 L64 148.500" stroke="#4a4a4a" stroke-width=".9"/><circle cx="56.800" cy="156" r="1.700" fill="#fff" stroke="#4a4a4a" stroke-width=".8"/><rect x="51" y="162.100" width="11" height="3.800" fill="#5dafa6"/><path d="M78.500 146 Q124 127.500 170 146 L162 179 H88z" fill="#fff" stroke="#a9a9a9" stroke-width=".8"/><clipPath id="ccl"><rect x="80" y="130" width="90" height="49"/></clipPath><ellipse cx="124.200" cy="166" rx="31.600" ry="28" fill="#559fb2" clip-path="url(#ccl)"/><g stroke="#7fc0cf" stroke-width=".5" clip-path="url(#ccl)"><path d="M94 146H154"/><path d="M94 152H154"/><path d="M94 158H154"/><path d="M94 170H154"/><path d="M94 176H154"/><path d="M104 136V179"/><path d="M114 136V179"/><path d="M134 136V179"/><path d="M144 136V179"/></g><path d="M95 163.500H153" stroke="#27343a" stroke-width="1.600" stroke-dasharray="1.200 .500"/><path d="M104 179 L114 166 L120 179M130 179L138 164L148 179" stroke="#8fcad6" stroke-width=".6" fill="none"/><circle cx="139" cy="152" r="2.200" fill="none" stroke="#9fd8e0" stroke-width=".6"/><path d="M139 154.500v5M136.500 157h5" stroke="#9fd8e0" stroke-width=".6"/><rect x="116.400" y="140.600" width="16.400" height="31.300" rx="5.500" fill="#353535"/><circle cx="124.600" cy="148" r="3.300" fill="#0f0f0f"/><circle cx="124.600" cy="156.800" r="3.300" fill="#0f0f0f"/><circle cx="124.600" cy="165.400" r="3.100" fill="#86cdb4"/><path d="M84 150.500 L94.300 146 L89 155.500 L88.300 151.200z" fill="#5dafa6"/><path d="M176 152l2 2.500l2.500-3" stroke="#7a7a7a" stroke-width=".6" fill="none"/><circle cx="188" cy="155" r="9.800" fill="#fff" stroke="#b5b5b5" stroke-width="1"/><text x="188" y="153.500" font-size="4.200" font-weight="700" fill="#b8322a" stroke="#b8322a" stroke-width=".25" lengthAdjust="spacingAndGlyphs" text-anchor="middle" font-family="'Liberation Sans',sans-serif" textLength="10.500">ERTMS</text><path d="M183.500 156.500q2 1.200 2.500 2.300h5q.5-1.100 2.500-2.300M183.500 161.500q2-1.200 2.500-2.300M193.500 161.500q-2-1.200-2.500-2.300" stroke="#5a5a5a" stroke-width=".8" fill="none"/></svg></symbol></defs></svg><svg style="left:0;top:163px;overflow:hidden" width="570" height="321" viewBox="0 0 570 321"><rect width="570" height="321" fill="url(#sbg)"/><g filter="url(#blur4)"><path d="M-12 94 C20 82 50 76 81 73 C110 69 125 67 140 67 C170 66 195 67 215 69 C250 72 275 78 296 85 C330 96 380 112 430 124 C480 136 530 142 585 150 V335 H-12z" fill="url(#cl1)"/></g><rect x="18" y="21.800" width="534" height="2.400" fill="#262a4e"/><rect x="18" y="294.300" width="534" height="2.400" fill="#262a4e"/><use href="#s8" width="570" height="321"/></svg></div>
<div id="tb"><svg style="left:320.500px;top:8px" width="12" height="12" viewBox="0 0 12 12"><rect x=".5" y=".5" width="11" height="11" rx="1.500" fill="#fcfcfc" stroke="#dcdcdc" stroke-width=".7"/><rect x="2.200" y="2" width="7.600" height="7.300" rx="1.800" fill="#3f6fe0"/><path d="M3.700 4.200h4.600M6 4.200v3.300" stroke="#dfe8ff" stroke-width="1" stroke-linecap="round"/></svg><div class="t" style="left:339.70px;top:6.41px;font-size:13.6px;font-weight:700;color:#2b2b2b;line-height:16px;">bez nazwy.key</div><div class="abs" style="left:439px;top:14.600px;width:11px;height:1.200px;background:#a9a9a9"></div><div class="t r" style="left:457.30px;top:6.50px;font-size:13.3px;font-weight:400;color:#a6a6a6;line-height:16px;">Edytowany</div><div class="t r" style="left:28.80px;top:53.87px;font-size:11.6px;font-weight:400;color:#505050;line-height:14px;transform:translateX(-50%);">Widok</div><div class="t r" style="left:86.60px;top:53.87px;font-size:11.6px;font-weight:400;color:#505050;line-height:14px;transform:translateX(-50%);">Zoom</div><div class="t r" style="left:154.30px;top:53.87px;font-size:11.6px;font-weight:400;color:#505050;line-height:14px;transform:translateX(-50%);">Dodaj slajd</div><div class="t r" style="left:220.00px;top:53.87px;font-size:11.6px;font-weight:400;color:#505050;line-height:14px;transform:translateX(-50%);">Odtwórz</div><div class="t r" style="left:274.00px;top:53.87px;font-size:11.6px;font-weight:400;color:#505050;line-height:14px;transform:translateX(-50%);">Tabela</div><div class="t r" style="left:325.00px;top:53.87px;font-size:11.6px;font-weight:400;color:#505050;line-height:14px;transform:translateX(-50%);">Wykres</div><div class="t r" style="left:376.00px;top:53.87px;font-size:11.6px;font-weight:400;color:#505050;line-height:14px;transform:translateX(-50%);">Tekst</div><div class="t r" style="left:425.60px;top:53.87px;font-size:11.6px;font-weight:400;color:#505050;line-height:14px;transform:translateX(-50%);">Kształt</div><div class="t r" style="left:487.00px;top:53.87px;font-size:11.6px;font-weight:400;color:#505050;line-height:14px;transform:translateX(-50%);">Multimedia</div><div class="t r" style="left:558.70px;top:53.87px;font-size:11.6px;font-weight:400;color:#505050;line-height:14px;transform:translateX(-50%);">Udostępnij</div><div class="t r" style="left:629.00px;top:53.87px;font-size:11.6px;font-weight:400;color:#505050;line-height:14px;transform:translateX(-50%);">Format</div><div class="t r" style="left:692.70px;top:53.87px;font-size:11.6px;font-weight:400;color:#505050;line-height:14px;transform:translateX(-50%);">Animacja</div><div class="t r" style="left:756.00px;top:53.87px;font-size:11.6px;font-weight:400;color:#505050;line-height:14px;transform:translateX(-50%);">Dokument</div><svg style="left:20.5px;top:32.5px" width="16" height="13" viewBox="0 0 16 13" fill="none" stroke="#606060" stroke-width="1.300" stroke-linecap="round" stroke-linejoin="round"><rect x=".65" y=".65" width="14.700" height="11.700" rx="2.400"/><path d="M5.300 .65V12.350"/><path d="M2.300 3.300h1.300M2.300 5.300h1.300M2.300 7.300h1.300" stroke-width=".9"/></svg><div class="abs" style="left:59.800px;top:28.500px;width:53.700px;height:21.300px;border-radius:5px;background:#efefef"></div><div class="t r" style="left:67.30px;top:31.73px;font-size:12px;font-weight:400;color:#3a3a3a;line-height:16px;">29%</div><svg style="left:98.5px;top:36.5px" width="9" height="7" viewBox="0 0 9 7" fill="none" stroke="#606060" stroke-width="1.300" stroke-linecap="round" stroke-linejoin="round"><path d="M1.200 1.500L4.500 5L7.800 1.500" stroke-width="1.400" stroke="#444"/></svg><svg style="left:146px;top:32.5px" width="17" height="13" viewBox="0 0 17 13" fill="none" stroke="#606060" stroke-width="1.300" stroke-linecap="round" stroke-linejoin="round"><rect x=".65" y=".65" width="15.200" height="11.700" rx="2.200"/><path d="M8.250 4v5M5.750 6.500h5" stroke-width="1.200"/></svg><svg style="left:216px;top:32.500px" width="11" height="12" viewBox="0 0 11 12"><path d="M1 1.200Q1 .4 1.800 .8L9.700 5.400Q10.400 5.900 9.700 6.400L1.800 11Q1 11.400 1 10.600z" fill="#606060"/></svg><svg style="left:266.5px;top:32.5px" width="16" height="13" viewBox="0 0 16 13" fill="none" stroke="#606060" stroke-width="1.300" stroke-linecap="round" stroke-linejoin="round"><rect x=".65" y=".65" width="14.700" height="11.700" rx="2.200"/><path d="M.65 4.500H15.350M.65 8.400H15.350M8 .65V12.350" stroke-width="1.100"/></svg><svg style="left:317.5px;top:31.8px" width="15" height="15" viewBox="0 0 15 15" fill="none" stroke="#606060" stroke-width="1.300" stroke-linecap="round" stroke-linejoin="round"><circle cx="7.500" cy="7.500" r="6.500"/><path d="M7.500 1V7.500L12.500 11.500M7.500 7.500L13.500 5.500" stroke-width="1.200"/></svg><svg style="left:367.5px;top:32.5px" width="17" height="13" viewBox="0 0 17 13" fill="none" stroke="#606060" stroke-width="1.300" stroke-linecap="round" stroke-linejoin="round"><rect x=".65" y=".65" width="15.200" height="11.700" rx="2" stroke-dasharray="3.800 1.600" stroke-linecap="butt"/><path d="M5.900 9.300L8.250 3.400L10.600 9.300M6.800 7.400h2.900" stroke-width="1.100"/></svg><svg style="left:417.5px;top:30.3px" width="16" height="16" viewBox="0 0 16 16" fill="none" stroke="#606060" stroke-width="1.300" stroke-linecap="round" stroke-linejoin="round"><circle cx="6" cy="6" r="5.300"/><rect x="5.800" y="5.800" width="9.400" height="9.400" rx="2.200" fill="#ececec"/></svg><svg style="left:479.5px;top:32.5px" width="16" height="13" viewBox="0 0 16 13" fill="none" stroke="#606060" stroke-width="1.300" stroke-linecap="round" stroke-linejoin="round"><rect x=".65" y=".65" width="14.700" height="11.700" rx="2.200"/><path d="M1 11L5 7L7.500 9.200L10.500 6L15 10.500V11.500Q15 12.300 14 12.300H2Q1 12.300 1 11z" fill="#606060" stroke="none"/><circle cx="4.700" cy="4.300" r="1.200" fill="#606060" stroke="none"/></svg><svg style="left:553px;top:30.3px" width="13" height="16" viewBox="0 0 13 16" fill="none" stroke="#606060" stroke-width="1.300" stroke-linecap="round" stroke-linejoin="round"><path d="M4 6.200H2.600Q1 6.200 1 7.800V13.200Q1 14.800 2.600 14.800H10.400Q12 14.800 12 13.200V7.800Q12 6.200 10.400 6.200H9"/><path d="M6.500 10V1.200M3.900 3.600L6.500 1L9.100 3.600"/></svg><div class="abs" style="left:598.600px;top:28.500px;width:61.400px;height:21.300px;border-radius:5px;background:#e0e0e0"></div><svg style="left:622px;top:30px" width="16" height="18" viewBox="0 0 16 18"><g transform="rotate(40 8 9)" fill="none" stroke="#4a4a4a" stroke-width="1.200" stroke-linejoin="round"><path d="M3.500 1.500h9v4.500h-9z"/><path d="M6.500 1.500v2.300M9.500 1.500v2.300" stroke-width="1"/><path d="M3.500 6h9v2.600q0 .9-.9 .9h-7.200q-.9 0-.9-.9z"/><path d="M6.600 9.500v6q0 1.300 1.400 1.300t1.400-1.300v-6" /></g></svg><svg style="left:682.5px;top:29.5px" width="20" height="18" viewBox="0 0 20 18" fill="none" stroke="#606060" stroke-width="1.300" stroke-linecap="round" stroke-linejoin="round"><path d="M7.700 1.600L14 8.200Q14.700 9 14 9.800L7.700 16.400Q7 17 6.300 16.400L.9 9.800Q.3 9 .9 8.200L6.300 1.600Q7 .9 7.700 1.600z"/><path d="M11.800 1.600L18.800 8.200Q19.500 9 18.800 9.800L11.800 16.400"/></svg><div class="abs" style="left:724px;top:32px;width:1px;height:13px;background:#e2e2e2"></div><svg style="left:748px;top:32.5px" width="17" height="13" viewBox="0 0 17 13" fill="none" stroke="#606060" stroke-width="1.300" stroke-linecap="round" stroke-linejoin="round"><rect x=".65" y=".65" width="15.200" height="11.700" rx="2.200"/><rect x="4" y="3.700" width="8.500" height="5.600" fill="#606060" stroke="none"/></svg><svg style="left:821.5px;top:34px" width="13" height="12" viewBox="0 0 13 12" fill="none" stroke="#606060" stroke-width="1.300" stroke-linecap="round" stroke-linejoin="round"><path d="M1.200 1L6 6L1.200 11M7 1L11.800 6L7 11" stroke-width="1.400"/></svg></div>
<div id="panel"><div class="t r" style="left:136.00px;top:6.20px;font-size:13px;font-weight:400;color:#5a5a5a;line-height:16px;transform:translateX(-50%);">Slajd</div><div class="abs" style="left:0;top:27px;width:272px;height:1px;background:#d6d6d6"></div><div class="abs" style="left:11.400px;top:39.100px;width:249.200px;height:72.100px;border-radius:6px;background:#fff"></div><svg style="left:18.200px;top:53.900px;overflow:hidden;box-shadow:0 .5px 2px rgba(0,0,0,.35)" width="78.300" height="43.300" viewBox="0 0 78.300 43.300"><rect width="78.300" height="43.300" fill="#fbf2ef"/><rect x="2" y="2.200" width="74.300" height=".6" fill="#d9cfcf"/><rect x="2" y="39.800" width="74.300" height=".6" fill="#d9cfcf"/><rect x="43.700" y="5.400" width="31.300" height="31.300" fill="#b5a05f"/><rect x="43.700" y="5.400" width="31.300" height="22" fill="#bba864"/><rect x="43.700" y="30" width="31.300" height="6.700" fill="#9c8850"/><rect x="52" y="19.500" width="14.500" height="10.500" rx="1.500" fill="#4e4a3c"/><rect x="54" y="21.300" width="8" height="6.600" rx="1" fill="#a9ab9a"/><path d="M53.500 30v3M65 30v3" stroke="#4e4a3c" stroke-width=".9"/><text x="8.300" y="16.200" font-size="3.300" font-weight="700" fill="#2a2030" font-family="'Liberation Sans',sans-serif" textLength="28.500" lengthAdjust="spacingAndGlyphs">TYTUŁ SLAJDU</text><text x="7.500" y="22.200" font-size="2.200" fill="#55505a" font-family="'Liberation Sans',sans-serif" textLength="20">• Poziom punktora</text></svg><div class="t r" style="left:102.00px;top:51.60px;font-size:12.7px;font-weight:400;color:#8b8b8b;line-height:16px;">Makieta slajdu</div><div class="t" style="left:102.00px;top:69.14px;font-size:12.9px;font-weight:700;color:#161616;line-height:16px;">Tytuł i punktory ze</div><div class="t" style="left:102.00px;top:83.44px;font-size:12.9px;font-weight:700;color:#161616;line-height:16px;">zdjęciem</div><svg style="left:237.400px;top:72px" width="12" height="8" viewBox="0 0 12 8"><path d="M1 1.200L6 6.400L11 1.200" fill="none" stroke="#4a4a4a" stroke-width="1.500" stroke-linecap="round" stroke-linejoin="round"/></svg><div class="sep" style="top:122.500px"></div><div class="t" style="left:18.20px;top:138.77px;font-size:12.2px;font-weight:700;color:#1c1c1c;line-height:16px;">Wygląd</div><div class="cb" style="top:164.700px"><svg style="left:0;top:0" width="14" height="14" viewBox="0 0 14 14"><path d="M3.600 7.300L6 10L10.400 3.900" fill="none" stroke="#fff" stroke-width="1.700" stroke-linecap="round" stroke-linejoin="round"/></svg></div><div class="t r" style="left:39.20px;top:164.67px;font-size:12.8px;font-weight:400;color:#262626;line-height:16px;">Tytuł</div><div class="cb" style="top:189.900px"><svg style="left:0;top:0" width="14" height="14" viewBox="0 0 14 14"><path d="M3.600 7.300L6 10L10.400 3.900" fill="none" stroke="#fff" stroke-width="1.700" stroke-linecap="round" stroke-linejoin="round"/></svg></div><div class="t r" style="left:39.20px;top:189.77px;font-size:12.8px;font-weight:400;color:#262626;line-height:16px;">Treść</div><div class="cb" style="top:215.500px;background:#fff;box-shadow:0 0 0 .5px rgba(0,0,0,.12),0 .5px 1px rgba(0,0,0,.15)"></div><div class="t r" style="left:39.00px;top:214.84px;font-size:12.6px;font-weight:400;color:#262626;line-height:16px;">Numer slajdu</div><div class="sep" style="top:242px"></div><div class="t" style="left:17.20px;top:257.87px;font-size:12.8px;font-weight:700;color:#1c1c1c;line-height:16px;">Tło</div><div class="abs" style="left:16.200px;top:284.100px;width:238.200px;height:22.300px;border-radius:6px;background:#e0e0e0;box-shadow:inset 0 0 0 .5px rgba(0,0,0,.05)"></div><div class="abs" style="left:136px;top:285.100px;width:117.400px;height:20.300px;border-radius:5px;background:#fff;box-shadow:0 .5px 1.500px rgba(0,0,0,.28)"></div><div class="t r" style="left:75.75px;top:287.17px;font-size:13.4px;font-weight:400;color:#262626;line-height:16px;transform:translateX(-50%);">Standardowe</div><div class="t r" style="left:195.50px;top:287.17px;font-size:13.4px;font-weight:400;color:#262626;line-height:16px;transform:translateX(-50%);">Dynamiczne</div><div class="sw" style="left:31.4px;top:323.2px;background:linear-gradient(62deg,#6cf0e4 0%,#7aefb8 22%,#8eee8e 40%,#b4e862 66%,#dcc452 84%,#f09e44 100%)"></div><div class="sw" style="left:103.7px;top:323.2px;background:linear-gradient(180deg,#0b0b13 0%,#0b0b1e 40%,#111168 54%,#0d0d50 68%,#09092f 100%)"></div><div class="sw" style="left:176.1px;top:323.2px;background:linear-gradient(150deg,#1732b8 0%,#1d44d9 45%,#1733bd 100%)"></div><div class="sw" style="left:31.4px;top:375.7px;background:linear-gradient(180deg,#cfe3fb 0%,#d3e6fb 45%,#f4f7fd 62%,#fdfdff 100%)"></div><div class="sw" style="left:103.7px;top:375.7px;background:linear-gradient(155deg,#f452f1 0%,#e04ef0 30%,#a144f2 70%,#6a3ff2 100%)"></div><div class="sw" style="left:176.1px;top:375.7px;background:#0f2352"><svg style="left:0;top:0" width="60.300" height="35" viewBox="0 0 60.300 35"><path d="M0 16Q3 11 6 14Q9 18 13 17Q17 14 21 16Q24 19 27 17L30 35H0z" fill="#58c493"/><path d="M20 17Q26 11 33 13Q40 9 46 12Q52 9 60.300 11V35H12Q12 22 20 17z" fill="#7de3d0"/><path d="M0 22Q6 20 10 24Q13 30 12 35H0z" fill="#48b07e"/><path d="M28 35Q30 20 44 16Q54 15 60.300 20V35z" fill="#86e8d6" opacity=".7"/></svg></div><svg style="left:15px;top:368px" width="8" height="13" viewBox="0 0 8 13"><path d="M6.500 1.200L1.500 6.500L6.500 11.800" fill="none" stroke="#555" stroke-width="1.400" stroke-linecap="round" stroke-linejoin="round"/></svg><svg style="left:249.700px;top:368px" width="8" height="13" viewBox="0 0 8 13"><path d="M1.500 1.200L6.500 6.500L1.500 11.800" fill="none" stroke="#555" stroke-width="1.400" stroke-linecap="round" stroke-linejoin="round"/></svg><div class="abs" style="left:114.0px;top:428.100px;width:4.800px;height:4.800px;border-radius:50%;background:#5b5b5b"></div><div class="abs" style="left:127.0px;top:428.100px;width:4.800px;height:4.800px;border-radius:50%;background:#bdbdbd"></div><div class="abs" style="left:140.0px;top:428.100px;width:4.800px;height:4.800px;border-radius:50%;background:#bdbdbd"></div><div class="abs" style="left:153.0px;top:428.100px;width:4.800px;height:4.800px;border-radius:50%;background:#bdbdbd"></div><div class="t" style="left:17.60px;top:454.07px;font-size:12.8px;font-weight:700;color:#1c1c1c;line-height:16px;">Podgląd ruchu</div><div class="abs" style="left:215.900px;top:449.800px;width:39.100px;height:22.700px;border-radius:11.400px;background:#2f6de0"></div><div class="abs" style="left:233.200px;top:450.700px;width:20.900px;height:20.900px;border-radius:50%;background:#fff;box-shadow:0 .5px 1.500px rgba(0,0,0,.3)"></div><div class="sep" style="top:481px"></div><div class="t" style="left:16.60px;top:490.50px;font-size:12.1px;font-weight:700;color:#1c1c1c;line-height:16px;">Kolory</div><div class="abs" style="left:26.300px;top:515.500px;width:219.400px;height:20.900px;border:1px solid #c4c6cc;background:linear-gradient(90deg,#c9daf6 0%,#d2e2f9 33%,#f3f3f9 62%,#f8f6fb 75%,#f3e9f4 100%)"></div><svg style="left:19.8px;top:531.500px" width="13" height="20" viewBox="0 0 13 20"><path d="M6.500 .6L12.400 6V17.400Q12.400 19.400 10.400 19.400H2.600Q.6 19.400 .6 17.400V6z" fill="#f7f7f7" stroke="#d3d3d3" stroke-width=".8"/><rect x="2.600" y="8.200" width="7.800" height="8.600" rx="1" fill="#c9d9f5" stroke="#c9cdd6" stroke-width=".6"/></svg><svg style="left:93.1px;top:531.500px" width="13" height="20" viewBox="0 0 13 20"><path d="M6.500 .6L12.400 6V17.400Q12.400 19.400 10.400 19.400H2.600Q.6 19.400 .6 17.400V6z" fill="#f7f7f7" stroke="#d3d3d3" stroke-width=".8"/><rect x="2.600" y="8.200" width="7.800" height="8.600" rx="1" fill="#d3e3fa" stroke="#c9cdd6" stroke-width=".6"/></svg><svg style="left:165.5px;top:531.500px" width="13" height="20" viewBox="0 0 13 20"><path d="M6.500 .6L12.400 6V17.400Q12.400 19.400 10.400 19.400H2.600Q.6 19.400 .6 17.400V6z" fill="#f7f7f7" stroke="#d3d3d3" stroke-width=".8"/><rect x="2.600" y="8.200" width="7.800" height="8.600" rx="1" fill="#ffffff" stroke="#c9cdd6" stroke-width=".6"/></svg><svg style="left:239.2px;top:531.500px" width="13" height="20" viewBox="0 0 13 20"><path d="M6.500 .6L12.400 6V17.400Q12.400 19.400 10.400 19.400H2.600Q.6 19.400 .6 17.400V6z" fill="#f7f7f7" stroke="#d3d3d3" stroke-width=".8"/><rect x="2.600" y="8.200" width="7.800" height="8.600" rx="1" fill="#f3e9f3" stroke="#c9cdd6" stroke-width=".6"/></svg><div class="sep" style="top:565px"></div><div class="sep" style="top:581px"></div><div class="abs" style="left:35.800px;top:605.200px;width:200.400px;height:19.700px;border-radius:5px;background:#fff;box-shadow:0 .5px 1.500px rgba(0,0,0,.25)"></div><div class="t r" style="left:135.75px;top:606.74px;font-size:12.6px;font-weight:400;color:#262626;line-height:16px;transform:translateX(-50%);">Edycja makiety slajdu</div></div>
</div>
<svg style="left:1208.500px;top:24px;overflow:hidden" width="151.500" height="86" viewBox="0 0 151.500 86"><defs><linearGradient id="wd" x1="0" x2="1" y1="0" y2="0"><stop offset="0" stop-color="#98724a"/><stop offset=".12" stop-color="#b49062"/><stop offset=".26" stop-color="#9a754c"/><stop offset=".42" stop-color="#b8966a"/><stop offset=".58" stop-color="#a07a50"/><stop offset=".74" stop-color="#b7946a"/><stop offset=".88" stop-color="#9e7850"/><stop offset="1" stop-color="#a9855a"/></linearGradient><linearGradient id="dr" x1="0" x2="1"><stop offset="0" stop-color="#c1c0ba"/><stop offset=".4" stop-color="#cbcbc6"/><stop offset="1" stop-color="#d6d6d2"/></linearGradient><linearGradient id="dr2" x1="0" x2="1" y1="0" y2="1"><stop offset="0" stop-color="#cdcdc8"/><stop offset=".5" stop-color="#d3d3cf"/><stop offset="1" stop-color="#c9c9c4"/></linearGradient><filter id="cb"><feGaussianBlur stdDeviation=".55"/></filter></defs><g filter="url(#cb)"><rect width="151.500" height="86" fill="#a07a50"/><rect x="0" y="0" width="21" height="58" fill="url(#wd)"/><rect x="49.500" y="0" width="51" height="86" fill="url(#wd)"/><g stroke="#8f6232" stroke-width=".5" opacity=".55"><path d="M56 0V60M63 0V55M71 0V30M79 0V25M88 0V24M95 0V40M6 0V58M13 0V58"/></g><rect x="100.300" y="0" width="51.200" height="86" fill="url(#dr)"/><rect x="109" y="8" width="42.500" height="78" fill="url(#dr2)" stroke="#c2c2bc" stroke-width=".6"/><rect x="111.300" y="48.600" width="7.800" height="2.400" rx="1" fill="#1d1d1d"/><circle cx="113.300" cy="53" r="1.400" fill="#1d1d1d"/><rect x="101" y="42" width="1.300" height="5" fill="#9b8c6a"/><rect x="21.700" y="0" width="27.800" height="71" fill="#7f5d3a"/><rect x="21.700" y="0" width="27.800" height="5" fill="#a07a4e"/><rect x="20.700" y="0" width="1.200" height="86" fill="#6b4d30"/><rect x="22.500" y="5" width="26" height="15" fill="#5f4226"/><rect x="22.500" y="22" width="26" height="15" fill="#6a5038"/><rect x="27" y="23.500" width="21" height="6" fill="#cfc6b6"/><rect x="22.500" y="39" width="26" height="15.200" fill="#553a22"/><rect x="22.500" y="56.500" width="26" height="14" fill="#5f4428"/><g fill="#a97a45"><rect x="21.700" y="19.500" width="27.800" height="2"/><rect x="21.700" y="36.600" width="27.800" height="2"/><rect x="21.700" y="54" width="27.800" height="2"/><rect x="21.700" y="70" width="27.800" height="1.500"/></g><rect x="25.500" y="8" width="2" height="11.500" fill="#e8e4da"/><rect x="28" y="11" width="6" height="8.500" fill="#7d8a6a"/><rect x="34" y="10" width="3.500" height="9.500" fill="#a3283a"/><rect x="37.500" y="10.500" width="3" height="9" fill="#6a1f2a"/><rect x="40.500" y="11" width="3.500" height="8.500" fill="#2b2b30"/><rect x="44" y="9.500" width="4" height="10" fill="#7a6a5a"/><rect x="28" y="8.500" width="16" height="2.500" fill="#e9e6df"/><path d="M25 36V27Q27 24 29 28L31 30Q34 26 36 30L38 29Q41 27 43 31L48 30V36.600H25z" fill="#6f7358"/><rect x="25" y="24" width="3" height="6" fill="#9b3030"/><rect x="33" y="27" width="14" height="2.500" fill="#e4e0d6"/><rect x="25" y="45" width="5" height="9" fill="#9a6a3a"/><rect x="30.500" y="41.500" width="2" height="12.500" fill="#3d6a4a"/><rect x="32.500" y="41" width="1.500" height="13" fill="#ece8e0"/><rect x="34" y="41" width="3" height="13" fill="#b5283c"/><rect x="37" y="42" width="3" height="12" fill="#5a2a30"/><rect x="40" y="42" width="2.500" height="12" fill="#a3283a"/><rect x="42.500" y="43" width="2.500" height="11" fill="#e0dbd0"/><rect x="45" y="44" width="3" height="10" fill="#8d3038"/><rect x="27" y="39.500" width="20" height="2" fill="#b06a70"/><rect x="25.500" y="58" width="3" height="12" fill="#c8a860"/><rect x="28.500" y="59" width="2" height="11" fill="#8a5a30"/><rect x="30.500" y="58.500" width="3" height="11.500" fill="#d8cfa8"/><rect x="33.500" y="60" width="3" height="10" fill="#b5a070"/><rect x="36.500" y="60.500" width="2.500" height="9.500" fill="#c45a4a"/><rect x="39" y="60" width="3" height="10" fill="#d9c9a0"/><rect x="42" y="60.500" width="2.500" height="9.500" fill="#a56a5a"/><rect x="44.500" y="61" width="3.500" height="9" fill="#cbb88a"/><rect x="29" y="68" width="19" height="2.500" fill="#8a9a8a"/><rect x="21.700" y="71.500" width="27.800" height="14.500" fill="#b59462"/><path d="M21.700 72H49.500" stroke="#8a6238" stroke-width=".6"/><rect x="30" y="72" width=".6" height="14" fill="#9a7040"/><rect x="0" y="57.500" width="21" height="14" fill="#b9a47e"/><rect x="0" y="57.500" width="21" height="2.500" fill="#a08458"/><g stroke="#a89068" stroke-width=".5"><path d="M0 62H21M0 64.500H21M0 67H21M0 69.500H21"/></g><rect x="0" y="71.500" width="21" height="14.500" fill="#8a8478"/><rect x="1.500" y="72.500" width="18" height="13.500" fill="#6b6b69"/><rect x="0" y="74" width="1.500" height="12" fill="#d8d8d8"/><path d="M44.500 86 Q46.500 73 52 67 Q58 60 70 56 L77 53 H93 L99 52.500 Q107 56 112 63 Q119 72 125 86z" fill="#181b1e"/><path d="M75.500 50 Q84 62 93.500 50 L95 57 Q85 66 74.500 57z" fill="#c39c84"/><ellipse cx="84.200" cy="43.200" rx="13.700" ry="19.600" fill="#d4ae96"/><ellipse cx="84" cy="31.500" rx="12.300" ry="8.200" fill="#dfbfa9"/><path d="M71 46Q72 58 79 62Q84.500 64.500 90 62Q96.500 58 97.500 46Q95 56 84.500 57Q74 56 71 46z" fill="#b59c8c" opacity=".75"/><path d="M72.500 57 Q84 68 96.500 56.500 L97.500 59 Q84 71 71.500 59z" fill="#181b1e"/><g><rect x="72.400" y="39.200" width="10.900" height="8.800" rx="2.800" fill="#e3ab86" stroke="#3a2119" stroke-width="1.500"/><rect x="86" y="40" width="10.600" height="8.800" rx="2.800" fill="#e3ab86" stroke="#3a2119" stroke-width="1.500"/><path d="M83 42.300Q84.500 41.300 86 42.600" stroke="#3a2119" stroke-width="1.300" fill="none"/><path d="M72.400 41L70.600 40.500M96.600 42L98 41.700" stroke="#3a2119" stroke-width="1"/></g><path d="M79.500 56.300Q83 55 86.500 56.600" stroke="#96685c" stroke-width="1.100" fill="none"/><path d="M84.300 47.500v4.500" stroke="#ba917a" stroke-width="1.400"/><path d="M82 53h4.500" stroke="#b08a76" stroke-width=".8"/><ellipse cx="70.500" cy="43.500" rx="1.300" ry="3.600" fill="#c2977e"/><ellipse cx="98" cy="44.500" rx="1.100" ry="3.400" fill="#c2977e"/><path d="M45 86Q50 83.500 57 86zM69 86q2-1.200 4 0zM99 86q2-1.200 4 0z" fill="#d2a98e"/></g></svg>
</body></html>
